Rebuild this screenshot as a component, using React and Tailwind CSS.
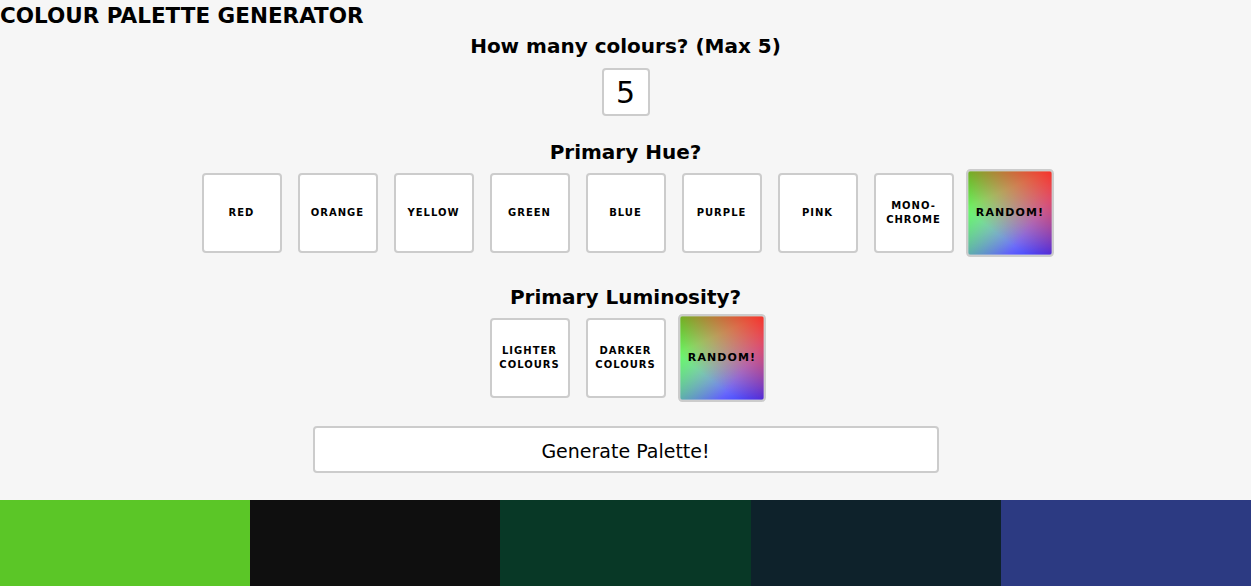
import React from 'react';

const hues = ['Red', 'Orange', 'Yellow', 'Green', 'Blue', 'Purple', 'Pink', 'Mono-chrome'];
const lums = ['Lighter colours', 'Darker colours'];
const palette = ['bg-[#5bc627]', 'bg-[#0f0f0f]', 'bg-[#083826]', 'bg-[#0e222b]', 'bg-[#2c3a82]'];

const randomBg =
  'bg-[linear-gradient(217deg,rgba(255,0,0,.8),rgba(255,0,0,0)_70.71%),linear-gradient(127deg,rgba(0,255,0,.8),rgba(0,255,0,0)_70.71%),linear-gradient(336deg,rgba(0,0,255,.8),rgba(0,0,255,0)_70.71%)]';

const Option = ({ label, random }) => (
  <button
    className={
      'w-20 h-20 rounded border-2 border-[#cccccc] flex items-center justify-center px-1 text-center text-[10px] leading-[14px] tracking-[1px] font-bold uppercase text-black ' +
      (random ? randomBg + ' scale-110' : 'bg-white')
    }
  >
    {label === 'Mono-chrome' ? (
      <span>
        Mono-
        <br />
        chrome
      </span>
    ) : (
      <span>{label}</span>
    )}
  </button>
);

const App = () => {
  return (
    <div className="min-h-screen bg-[#f6f6f6] text-black font-['DejaVu_Sans',sans-serif]">
      <h1 className="text-[21.5px] leading-[31px] font-bold m-0">COLOUR PALETTE GENERATOR</h1>

      <div className="flex flex-col items-center">
        <h2 className="text-[20px] leading-[30px] font-bold">How many colours? (Max 5)</h2>
        <input
          type="text"
          defaultValue="5"
          className="mt-[7px] w-12 h-12 rounded border-2 border-[#cccccc] bg-white text-center text-[30px] outline-none"
        />

        <h2 className="mt-[21px] text-[20px] leading-[30px] font-bold">Primary Hue?</h2>
        <div className="mt-1.5 flex gap-4">
          {hues.map((h) => (
            <Option key={h} label={h} />
          ))}
          <Option label="Random!" random />
        </div>

        <h2 className="mt-[29px] text-[20px] leading-[30px] font-bold">Primary Luminosity?</h2>
        <div className="mt-1.5 flex gap-4">
          {lums.map((l) => (
            <Option key={l} label={l} />
          ))}
          <Option label="Random!" random />
        </div>

        <button className="mt-7 w-[626px] h-[47px] pt-1 rounded border-2 border-[#cccccc] bg-white text-[19px]">
          Generate Palette!
        </button>
      </div>

      <div className="mt-[27px] flex h-[86px]">
        {palette.map((c) => (
          <div key={c} className={'flex-1 ' + c} />
        ))}
      </div>
    </div>
  );
};

export default App;
